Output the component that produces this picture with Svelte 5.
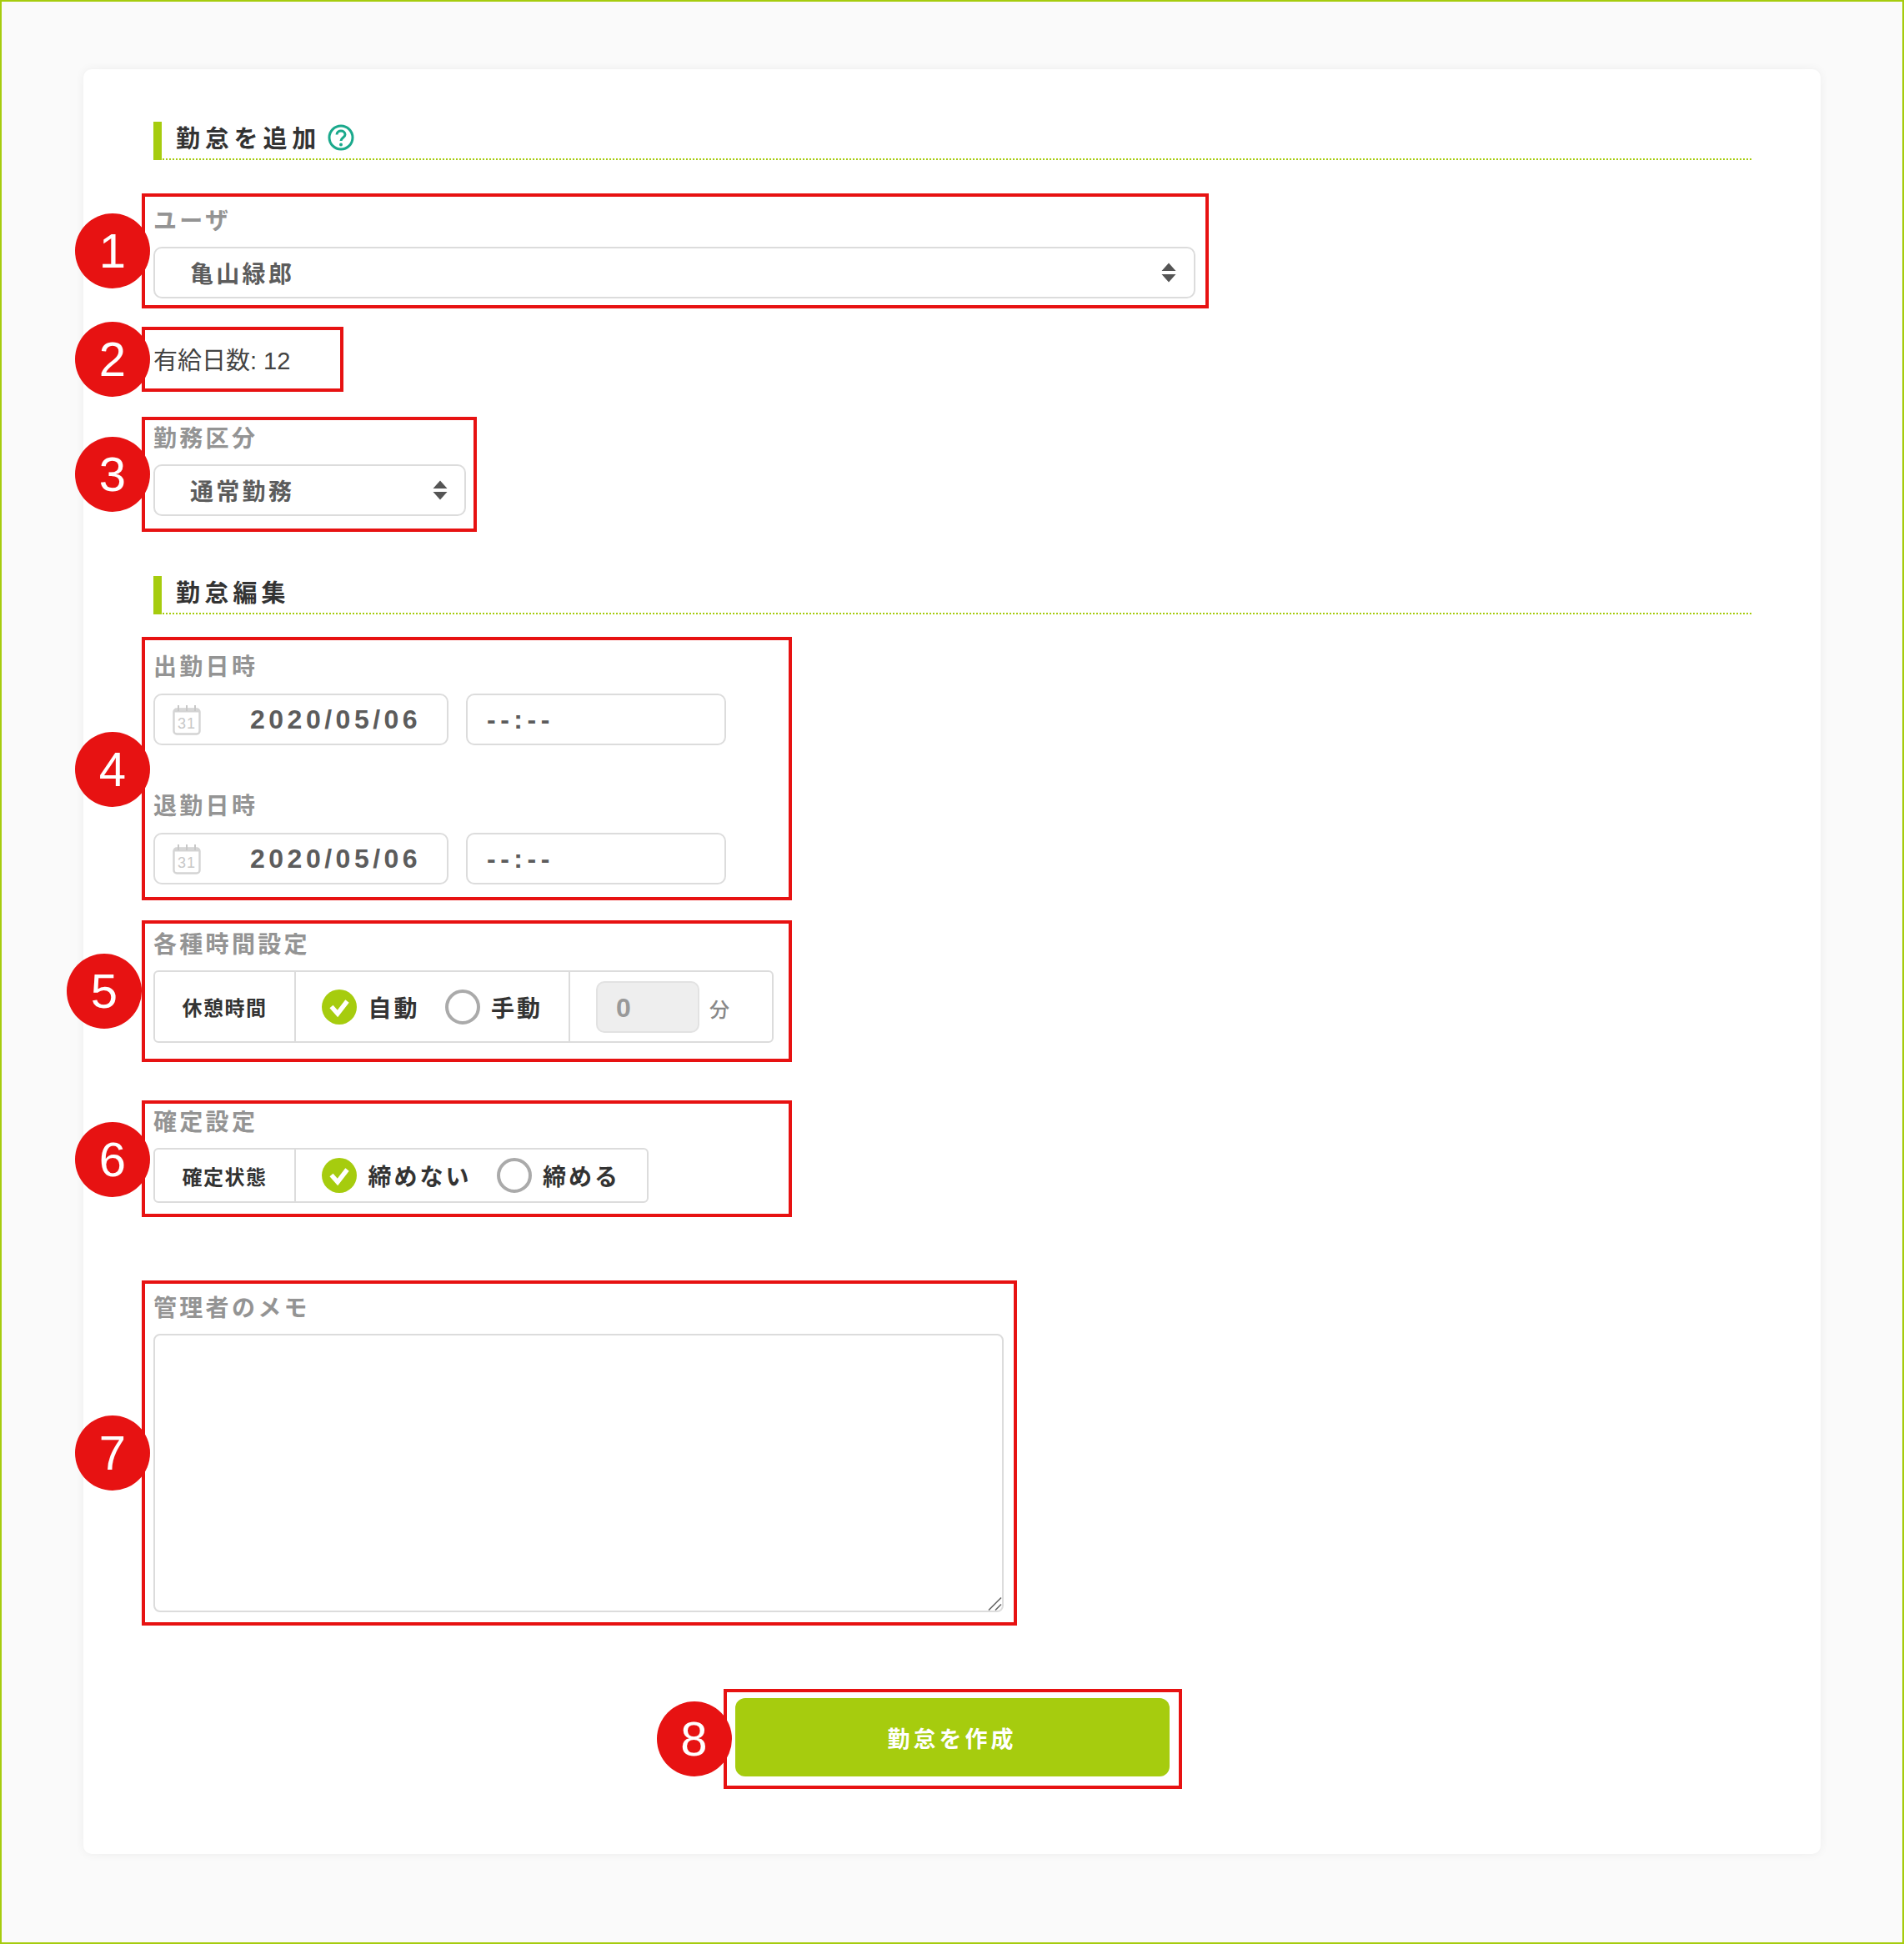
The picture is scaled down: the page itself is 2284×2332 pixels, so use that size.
<script>
	// two date rows in the edit section
	const dateRows = [
		{ label: "出勤日時", date: "2020/05/06" },
		{ label: "退勤日時", date: "2020/05/06" }
	];
</script>

{#snippet badge(n, cls = "")}
	<span class="badge {cls}">{n}</span>
{/snippet}

{#snippet arrows()}
	<svg class="arrows" width="18" height="24" viewBox="0 0 18 24" aria-hidden="true">
		<path d="M9 0.5 L17.5 10 H0.5 Z M0.5 14 H17.5 L9 23.5 Z" fill="#555" />
	</svg>
{/snippet}

{#snippet radio(on, text)}
	<span class="radio-item">
		{#if on}
			<svg class="radio" width="42" height="42" viewBox="0 0 42 42" aria-hidden="true">
				<circle cx="21" cy="21" r="21" fill="#a6cc0e" />
				<path d="M11.5 20.5 L19 29 L30.5 14" fill="none" stroke="#fff" stroke-width="5.5" />
			</svg>
		{:else}
			<svg class="radio" width="42" height="42" viewBox="0 0 42 42" aria-hidden="true">
				<circle cx="21" cy="21" r="19" fill="#fff" stroke="#aaa" stroke-width="4" />
			</svg>
		{/if}
		<span class="radio-text">{text}</span>
	</span>
{/snippet}

<div class="page">
	<main class="card">
		<h2 class="heading">
			<span>勤怠を追加</span>
			<svg class="help" width="32" height="32" viewBox="0 0 32 32" aria-hidden="true">
				<circle cx="16" cy="16" r="14" fill="none" stroke="#1aa98c" stroke-width="3" />
				<path d="M11 12.5 C11 6.5 21 6.5 21 12.5 C21 16 16 16 16 20" fill="none" stroke="#1aa98c" stroke-width="3" />
				<circle cx="16" cy="24.5" r="2" fill="#1aa98c" />
			</svg>
		</h2>

		<section class="mark m1">
			{@render badge(1)}
			<div class="label">ユーザ</div>
			<div class="field select">
				<span>亀山緑郎</span>
				{@render arrows()}
			</div>
		</section>

		<section class="mark m2">
			{@render badge(2)}
			<span class="paid">有給日数: 12</span>
		</section>

		<section class="mark m3">
			{@render badge(3)}
			<div class="label">勤務区分</div>
			<div class="field select">
				<span>通常勤務</span>
				{@render arrows()}
			</div>
		</section>

		<h2 class="heading second"><span>勤怠編集</span></h2>

		<section class="mark m4">
			{@render badge(4)}
			{#each dateRows as row}
				<div class="date-block">
					<div class="label">{row.label}</div>
					<div class="date-row">
						<div class="field date">
							<svg class="cal" width="34" height="37" viewBox="0 0 34 37" aria-hidden="true">
								<rect x="1.5" y="5.5" width="31" height="30" rx="3.5" fill="#fff" stroke="#d4d4d4" stroke-width="2.4" />
								<path d="M1.5 8 H32.5" stroke="#d4d4d4" stroke-width="3" />
								<path d="M7 1 V8 M17 1 V8 M27 1 V8" stroke="#c8c8c8" stroke-width="2" />
								<text x="17" y="29" text-anchor="middle" class="cal-num">31</text>
							</svg>
							<span>{row.date}</span>
						</div>
						<div class="field time">--:--</div>
					</div>
				</div>
			{/each}
		</section>

		<section class="mark m5">
			{@render badge(5, "shift")}
			<div class="label">各種時間設定</div>
			<div class="table">
				<div class="cell head">休憩時間</div>
				<div class="cell radios">
					{@render radio(true, "自動")}
					{@render radio(false, "手動")}
				</div>
				<div class="cell minutes">
					<div class="num">0</div>
					<span class="unit">分</span>
				</div>
			</div>
		</section>

		<section class="mark m6">
			{@render badge(6)}
			<div class="label">確定設定</div>
			<div class="table">
				<div class="cell head">確定状態</div>
				<div class="cell radios">
					{@render radio(true, "締めない")}
					{@render radio(false, "締める")}
				</div>
			</div>
		</section>

		<section class="mark m7">
			{@render badge(7)}
			<div class="label">管理者のメモ</div>
			<div class="memo-wrap">
				<textarea class="memo"></textarea>
				<svg class="grip" width="17" height="17" viewBox="0 0 17 17" aria-hidden="true">
					<path d="M1 16.5 L16 1.5 M9 16.5 L16 9.5" stroke="#666" stroke-width="1.6" fill="none" />
				</svg>
			</div>
		</section>

		<section class="mark m8">
			{@render badge(8)}
			<button class="submit" type="button">勤怠を作成</button>
		</section>
	</main>
</div>

<style>
	:global(body) {
		margin: 0;
	}

	.page {
		box-sizing: border-box;
		height: 2332px;
		padding: 81px 98px 0;
		border: 2px solid #a6cc0e;
		background: #fafafa;
		font-family: "Liberation Sans", "Noto Sans CJK JP", sans-serif;
		color: #444;
	}

	.card {
		box-sizing: border-box;
		height: 2141px;
		padding: 63px 83px 0 84px;
		background: #fff;
		border-radius: 10px;
		box-shadow: 0 0 12px rgba(0, 0, 0, 0.06);
	}

	.heading {
		display: flex;
		align-items: center;
		gap: 8px;
		box-sizing: border-box;
		height: 46px;
		margin: 0;
		padding: 0 0 8px 27px;
		border-bottom: 2px dotted #a6cc0e;
		position: relative;
		font-size: 29px;
		font-weight: 700;
		letter-spacing: 5.8px;
		color: #333;
	}

	.heading::before {
		content: "";
		position: absolute;
		left: 0;
		top: 0;
		bottom: -2px;
		width: 10px;
		background: #a6cc0e;
	}

	.help {
		margin-top: 2px;
	}

	.heading.second {
		margin-top: 53px;
		letter-spacing: 5.2px;
	}

	.mark {
		position: relative;
		box-sizing: border-box;
		margin-left: -14px;
		padding: 10px;
		border: 4px solid #e71212;
	}

	.badge {
		position: absolute;
		left: -84px;
		top: 50%;
		width: 90px;
		height: 90px;
		margin-top: -45px;
		border-radius: 50%;
		background: #e71212;
		color: #fff;
		font-size: 58px;
		line-height: 90px;
		text-align: center;
	}

	.badge.shift {
		left: -94px;
	}

	.m4 .badge,
	.m6 .badge {
		margin-top: -44px;
	}

	.m1 {
		width: 1280px;
		height: 138px;
		margin-top: 40px;
		padding-top: 8px;
	}

	.m1 .label,
	.m3 .label {
		height: 46px;
	}

	.m1 .select {
		width: 1250px;
		padding-right: 21px;
	}

	.m2 {
		width: 242px;
		height: 78px;
		margin-top: 22px;
		padding-bottom: 12px;
		display: flex;
		align-items: center;
	}

	.m3 {
		width: 402px;
		height: 138px;
		margin-top: 30px;
		padding-top: 1px;
	}

	.m3 .select {
		width: 375px;
		padding-right: 20px;
	}

	.m4 {
		width: 780px;
		height: 316px;
		margin-top: 27px;
		padding-top: 11px;
	}

	.m5 {
		width: 780px;
		height: 170px;
		margin-top: 24px;
		padding-top: 4px;
	}

	.m6 {
		width: 780px;
		height: 140px;
		margin-top: 46px;
		padding-top: 1px;
	}

	.m7 {
		width: 1050px;
		height: 414px;
		margin-top: 76px;
		padding-top: 8px;
	}

	.m8 {
		width: 550px;
		height: 120px;
		margin: 76px auto 0;
		padding: 7px 11px 0 10px;
	}

	.label {
		height: 44px;
		font-size: 28px;
		font-weight: 700;
		line-height: 44px;
		letter-spacing: 3.3px;
		color: #949494;
	}

	.paid {
		font-size: 29px;
		color: #444;
	}

	.field {
		box-sizing: border-box;
		height: 62px;
		border: 2px solid #dcdcdc;
		border-radius: 10px;
		background: #fff;
		display: flex;
		align-items: center;
		font-weight: 700;
		color: #5c5c5c;
	}

	.select {
		justify-content: space-between;
		margin-top: 6px;
		padding: 0 22px 0 42px;
		font-size: 28px;
		letter-spacing: 3.3px;
	}

	.date-block {
		height: 167px;
	}

	.date-row {
		display: flex;
		gap: 21px;
		margin-top: 9px;
	}

	.date {
		width: 354px;
		padding-left: 21px;
		font-size: 32px;
		letter-spacing: 4.5px;
	}

	.date span {
		margin-left: 59px;
	}

	.cal-num {
		font-size: 18px;
		font-weight: 400;
		letter-spacing: 1px;
		fill: #c8c8c8;
	}

	.time {
		width: 312px;
		padding-left: 23px;
		font-size: 32px;
		letter-spacing: 5.5px;
	}

	.table {
		display: inline-flex;
		box-sizing: border-box;
		margin-top: 8px;
		border: 2px solid #dcdcdc;
		border-radius: 6px;
		font-weight: 700;
		color: #333;
	}

	.m5 .table {
		width: 744px;
		height: 87px;
	}

	.m6 .table {
		width: 594px;
		height: 66px;
	}

	.cell {
		display: flex;
		align-items: center;
	}

	.head {
		box-sizing: border-box;
		width: 169px;
		justify-content: center;
		border-right: 2px solid #dcdcdc;
		font-size: 24px;
		letter-spacing: 1.5px;
	}

	.radios {
		box-sizing: border-box;
		padding-left: 31px;
		gap: 30px;
	}

	.m5 .radios {
		width: 329px;
		border-right: 2px solid #dcdcdc;
	}

	.radio-item {
		display: flex;
		align-items: center;
		gap: 13.5px;
	}

	.radio {
		flex: none;
	}

	.radio-text {
		font-size: 28px;
		letter-spacing: 3px;
	}

	.minutes {
		padding-left: 31px;
		gap: 12px;
	}

	.num {
		box-sizing: border-box;
		width: 124px;
		height: 62px;
		padding-left: 22px;
		border: 2px solid #e2e2e2;
		border-radius: 10px;
		background: #eee;
		color: #999;
		font-size: 32px;
		line-height: 60px;
	}

	.unit {
		padding-top: 4px;
		font-size: 24px;
		font-weight: 500;
		color: #888;
	}

	.memo-wrap {
		position: relative;
		width: 1020px;
		margin-top: 8px;
	}

	.memo {
		display: block;
		box-sizing: border-box;
		width: 1020px;
		height: 334px;
		border: 2px solid #dcdcdc;
		border-radius: 8px;
		background: #fff;
		outline: none;
		resize: none;
	}

	.grip {
		position: absolute;
		right: 2px;
		bottom: 2px;
	}

	.submit {
		display: block;
		width: 521px;
		height: 94px;
		padding: 0;
		border: 0;
		border-radius: 12px;
		background: #a6cc0e;
		color: #fff;
		font: inherit;
		font-size: 27px;
		font-weight: 700;
		letter-spacing: 4px;
	}
</style>
